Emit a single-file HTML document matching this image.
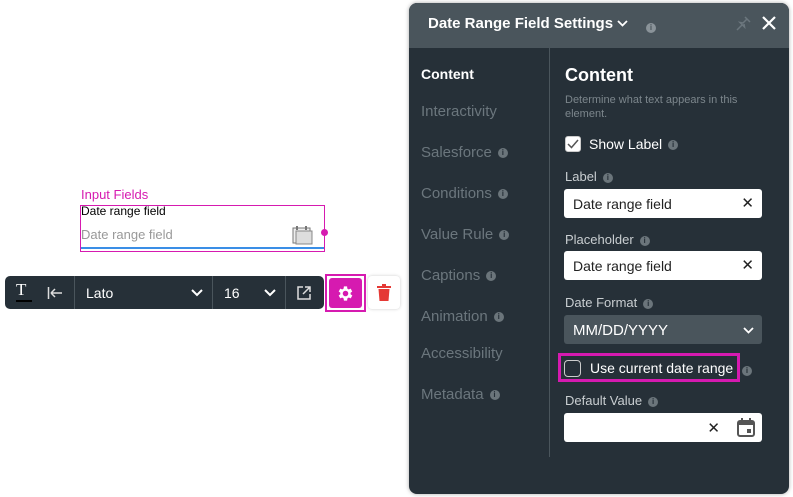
<!DOCTYPE html>
<html><head><style>
*{box-sizing:border-box;margin:0;padding:0}
body{width:793px;height:497px;background:#fff;position:relative;overflow:hidden;font-family:"Liberation Sans",sans-serif}
.a{position:absolute}
.info{display:inline-block;width:10px;height:10px;border-radius:50%;background:#6b757b;color:#263038;font-size:8px;font-weight:bold;text-align:center;line-height:10px;vertical-align:middle;margin-left:6px}
.nav{color:#6b767d;font-size:15px;left:421px}
.lbl{color:#c9ced1;font-size:13px;left:565px}
.inp{left:564px;width:198px;height:29px;background:#fff;border-radius:3px;color:#222;font-size:14px;padding:7px 9px}
.x{position:absolute;right:8px;top:5px;font-size:15px;color:#222}
</style></head><body>
<div class="a" style="left:81px;top:187px;color:#d61ab0;font-size:13px">Input Fields</div>
<div class="a" style="left:80px;top:205px;width:245px;height:47px;border:1px solid #d61ab0"></div>
<div class="a" style="left:81px;top:204px;color:#000;font-size:12px">Date range field</div>
<div class="a" style="left:81px;top:227px;color:#999;font-size:13px">Date range field</div>
<div class="a" style="left:81px;top:247px;width:243px;height:2px;background:#3a8ee6;z-index:2"></div>
<svg class="a" style="left:292px;top:225px" width="22" height="20"><rect x="1" y="3" width="17" height="15" fill="#eee" stroke="#777"/><rect x="4" y="6" width="16" height="13" fill="#ddd" stroke="#888"/><line x1="5" y1="1" x2="5" y2="5" stroke="#777" stroke-width="2"/><line x1="14" y1="1" x2="14" y2="5" stroke="#777" stroke-width="2"/></svg>
<div class="a" style="left:321px;top:229px;width:7px;height:7px;border-radius:50%;background:#d61ab0"></div>
<div class="a" style="left:5px;top:276px;width:319px;height:33px;background:#263038;border-radius:5px"></div>
<div class="a" style="left:16px;top:280px;color:#fff;font-size:17px;font-family:'Liberation Serif',serif">T</div>
<div class="a" style="left:16px;top:300px;width:16px;height:2px;background:#000"></div>
<svg class="a" style="left:47px;top:286px" width="16" height="14"><path d="M1.5 1V13M4 7H15M4 7L8 3M4 7L8 11" fill="none" stroke="#ddd" stroke-width="1.5"/></svg>
<div class="a" style="left:74px;top:276px;width:1px;height:33px;background:#4a555c"></div>
<div class="a" style="left:86px;top:285px;color:#fff;font-size:14px">Lato</div>
<svg class="a" style="left:191px;top:289px" width="12" height="8"><path d="M1 1L6 6L11 1" fill="none" stroke="#fff" stroke-width="2"/></svg>
<div class="a" style="left:212px;top:276px;width:1px;height:33px;background:#4a555c"></div>
<div class="a" style="left:224px;top:285px;color:#fff;font-size:14px">16</div>
<svg class="a" style="left:264px;top:289px" width="12" height="8"><path d="M1 1L6 6L11 1" fill="none" stroke="#fff" stroke-width="2"/></svg>
<div class="a" style="left:285px;top:276px;width:1px;height:33px;background:#4a555c"></div>
<svg class="a" style="left:297px;top:286px" width="14" height="14"><path d="M6 1H1V13H13V8M8 1H13V6M13 1L6 8" fill="none" stroke="#ddd" stroke-width="1.5"/></svg>
<div class="a" style="left:325px;top:274px;width:41px;height:38px;border:2px solid #d61ab0"></div>
<div class="a" style="left:329px;top:278px;width:33px;height:30px;background:#d61ab0;border-radius:3px"></div>
<svg class="a" style="left:336px;top:284px" width="19" height="19" viewBox="0 0 24 24"><path fill="#fff" d="M19.4 13a7.5 7.5 0 0 0 0-2l2.1-1.6-2-3.5-2.5 1a7.5 7.5 0 0 0-1.7-1L15 3h-4l-.4 2.9a7.5 7.5 0 0 0-1.7 1l-2.5-1-2 3.5L6.5 11a7.5 7.5 0 0 0 0 2l-2.1 1.6 2 3.5 2.5-1a7.5 7.5 0 0 0 1.7 1L11 21h4l.4-2.9a7.5 7.5 0 0 0 1.7-1l2.5 1 2-3.5zM13 15.5a3.5 3.5 0 1 1 0-7 3.5 3.5 0 0 1 0 7z" transform="translate(-1 0)"/></svg>
<div class="a" style="left:368px;top:276px;width:32px;height:33px;background:#fff;border-radius:4px;box-shadow:0 0 3px #ccc"></div>
<svg class="a" style="left:377px;top:284px" width="14" height="17"><rect x="0" y="2" width="14" height="2" fill="#e53935"/><rect x="5" y="0" width="4" height="2" fill="#e53935"/><path d="M1.5 5H12.5L11.5 17H2.5Z" fill="#e53935"/></svg>

<div class="a" style="left:409px;top:3px;width:380px;height:491px;background:#263038;border-radius:8px;overflow:hidden;box-shadow:0 0 4px #aaa">
<div style="height:45px;background:#4a555c"></div></div>
<div class="a" style="left:428px;top:15px;color:#fff;font-size:15px;font-weight:bold">Date Range Field Settings</div>
<svg class="a" style="left:617px;top:20px" width="11" height="7"><path d="M1 1L5.5 5.5L10 1" fill="none" stroke="#fff" stroke-width="1.8"/></svg>
<div class="a" style="left:646px;top:19px"><span class="info" style="margin:0;background:#8a9399;color:#4a555c">i</span></div>
<svg class="a" style="left:736px;top:16px" width="15" height="15"><path d="M9 1L14 6M11 3L7 7L4 6.5L8.5 11L8 8M6 9L1 14" fill="none" stroke="#6b767d" stroke-width="1.5"/></svg>
<svg class="a" style="left:762px;top:16px" width="14" height="14"><path d="M1 1L13 13M13 1L1 13" stroke="#fff" stroke-width="2.2"/></svg>
<div class="a" style="left:549px;top:47px;width:1px;height:410px;background:#4a555c"></div>
<div class="a nav" style="top:66px;color:#fff;font-weight:bold;font-size:14px">Content</div>
<div class="a nav" style="top:103px">Interactivity</div>
<div class="a nav" style="top:144px">Salesforce<span class="info">i</span></div>
<div class="a nav" style="top:185px">Conditions<span class="info">i</span></div>
<div class="a nav" style="top:226px">Value Rule<span class="info">i</span></div>
<div class="a nav" style="top:267px">Captions<span class="info">i</span></div>
<div class="a nav" style="top:308px">Animation<span class="info">i</span></div>
<div class="a nav" style="top:345px">Accessibility</div>
<div class="a nav" style="top:386px">Metadata<span class="info">i</span></div>
<div class="a" style="left:565px;top:65px;color:#fff;font-size:18px;font-weight:bold">Content</div>
<div class="a" style="left:565px;top:93px;color:#7c868c;font-size:11px;line-height:14px;width:200px">Determine what text appears in this element.</div>
<div class="a" style="left:565px;top:136px;width:16px;height:16px;border:1px solid #ccc;border-radius:3px;background:#fff"></div>
<svg class="a" style="left:567px;top:139px" width="12" height="10"><path d="M1 5L4.5 8.5L11 1" fill="none" stroke="#555" stroke-width="1.5"/></svg>
<div class="a" style="left:589px;top:136px;color:#fff;font-size:14px">Show Label<span class="info">i</span></div>
<div class="a lbl" style="top:169px">Label<span class="info">i</span></div>
<div class="a inp" style="top:189px">Date range field<span class="x">✕</span></div>
<div class="a lbl" style="top:232px">Placeholder<span class="info">i</span></div>
<div class="a inp" style="top:251px">Date range field<span class="x">✕</span></div>
<div class="a lbl" style="top:295px">Date Format<span class="info">i</span></div>
<div class="a inp" style="top:315px;background:#4a555c;color:#fff;font-size:15px">MM/DD/YYYY</div>
<svg class="a" style="left:743px;top:327px" width="11" height="7"><path d="M1 1L5.5 5.5L10 1" fill="none" stroke="#fff" stroke-width="1.8"/></svg>
<div class="a" style="left:558px;top:353px;width:182px;height:29px;border:3px solid #d61ab0"></div>
<div class="a" style="left:564px;top:360px;width:17px;height:17px;border:1px solid #ccc;border-radius:4px"></div>
<div class="a" style="left:590px;top:360px;color:#fff;font-size:14px">Use current date range</div>
<div class="a" style="left:742px;top:362px"><span class="info" style="margin:0">i</span></div>
<div class="a lbl" style="top:393px">Default Value<span class="info">i</span></div>
<div class="a inp" style="top:413px"><span class="x" style="right:42px;top:6px">✕</span></div>
<svg class="a" style="left:737px;top:418px" width="18" height="19"><rect x="1" y="3" width="16" height="15" rx="2" fill="none" stroke="#555" stroke-width="2"/><rect x="1" y="3" width="16" height="4" fill="#555"/><rect x="4" y="0" width="2" height="4" fill="#555"/><rect x="12" y="0" width="2" height="4" fill="#555"/><rect x="10" y="11" width="4" height="4" fill="#555"/></svg>
</body></html>
